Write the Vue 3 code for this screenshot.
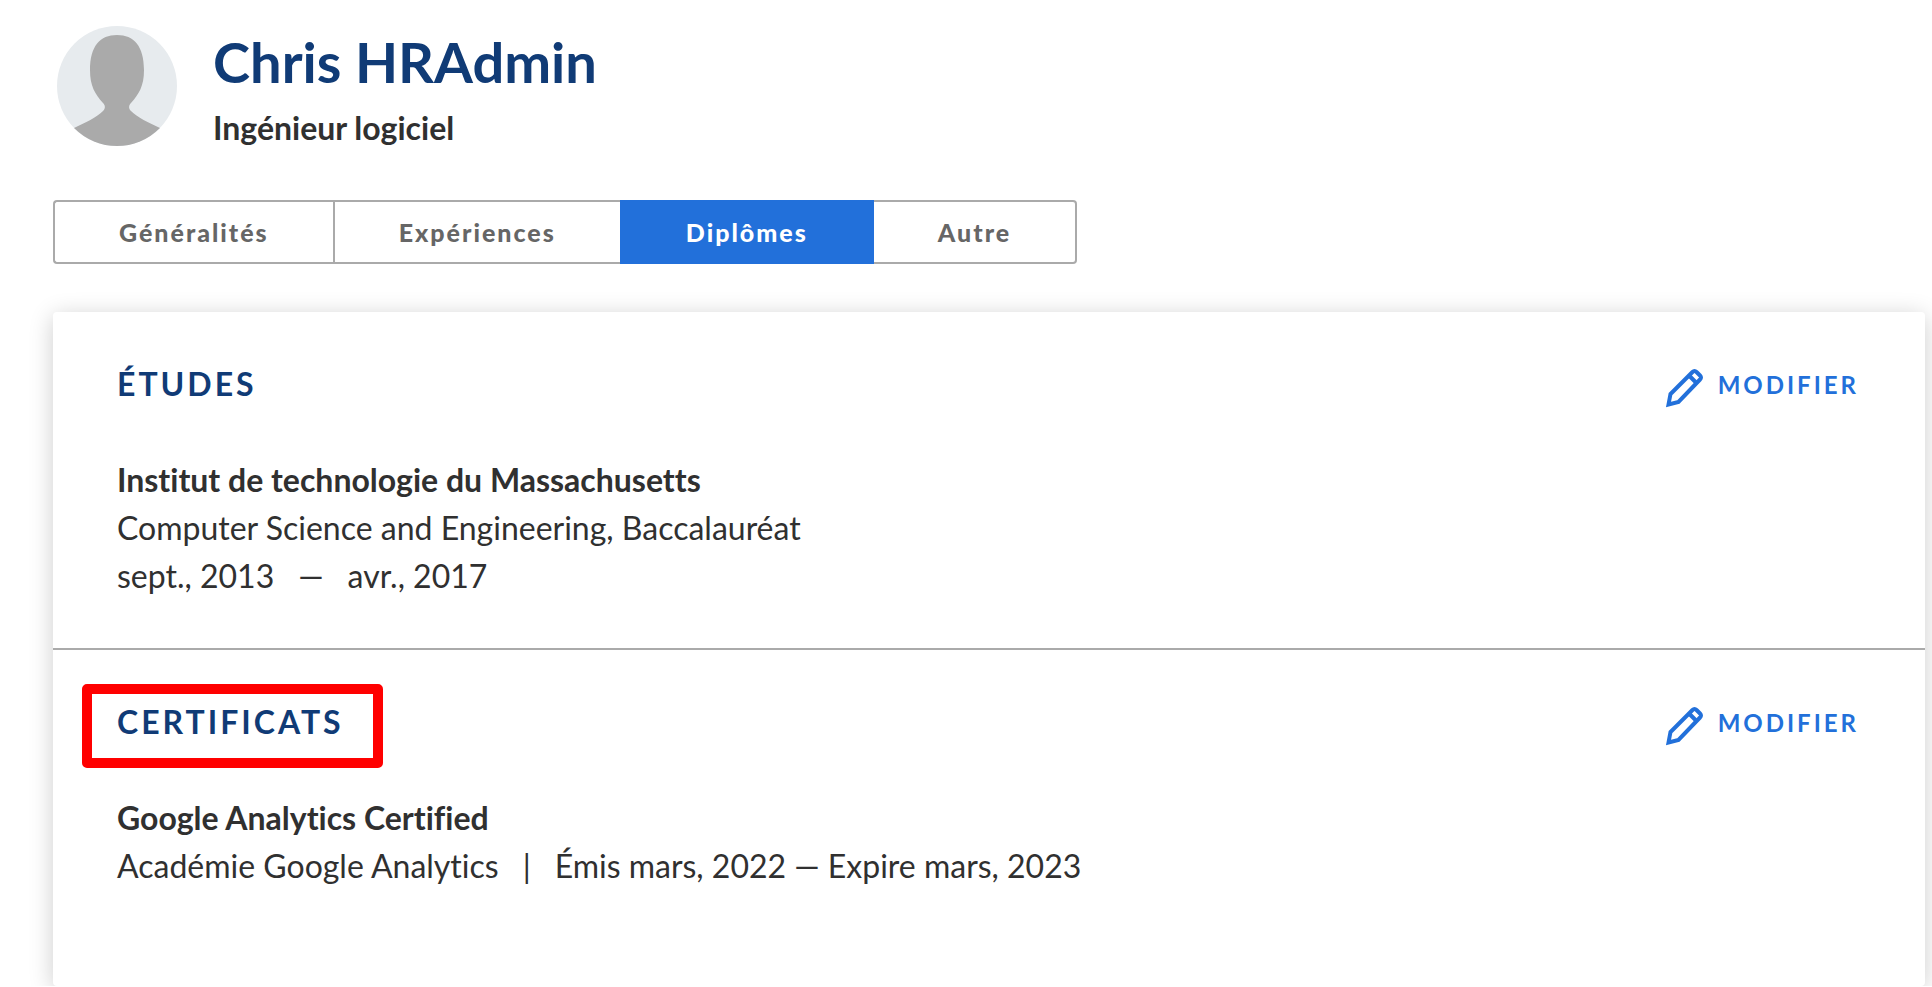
<!--src/components/EmployeeProfile.vue-->
<script setup>
import { ref } from "vue";

const employee = {
  name: "Chris HRAdmin",
  title: "Ingénieur logiciel"
};

const tabs = [
  { id: "general",    label: "Généralités" },
  { id: "experience", label: "Expériences" },
  { id: "degrees",    label: "Diplômes" },
  { id: "other",      label: "Autre" }
];
const activeTab = ref("degrees");

const sections = [
  {
    id: "education",
    title: "Études",
    highlighted: false,
    name: "Institut de technologie du Massachusetts",
    lines: [
      ["Computer Science and Engineering, Baccalauréat"],
      ["sept., 2013", "—", "avr., 2017"]
    ]
  },
  {
    id: "certificates",
    title: "Certificats",
    highlighted: true,
    name: "Google Analytics Certified",
    lines: [
      ["Académie Google Analytics", "|", "Émis mars, 2022 — Expire mars, 2023"]
    ]
  }
];
</script>

<template>
  <main class="profile">
    <header class="profile__header">
      <svg class="profile__avatar" viewBox="0 0 120 120" role="img" aria-label="Photo de profil">
        <defs>
          <clipPath id="avatar-clip"><circle cx="60" cy="60" r="60"/></clipPath>
        </defs>
        <g clip-path="url(#avatar-clip)">
          <rect width="120" height="120" fill="#e7ebee"/>
          <path
              fill="#aaa"
              d="M60 9C43 9 33 20 33 44C33 60 38 68 46 77C48 79 49 82 46 85C40 91 28 97 17 102V120H103V102C92 97 80 91 74 85C71 82 72 79 74 77C82 68 87 60 87 44C87 20 77 9 60 9Z"
          />
        </g>
      </svg>
      <div>
        <h1 class="profile__name">{{ employee.name }}</h1>
        <p class="profile__title">{{ employee.title }}</p>
      </div>
    </header>

    <nav class="tabs">
      <button
          v-for="tab in tabs"
          :key="tab.id"
          type="button"
          class="tabs__item"
          :class="{ 'tabs__item--active': tab.id === activeTab }"
          @click="activeTab = tab.id"
      >{{ tab.label }}</button>
    </nav>

    <div class="card">
      <section v-for="section in sections" :key="section.id" class="section">
        <div class="section__head">
          <h2 class="section__title" :class="{ 'section__title--highlighted': section.highlighted }">
            {{ section.title }}
          </h2>
          <button type="button" class="edit">
            <svg class="edit__icon" viewBox="0 0 40 48" aria-hidden="true">
              <g fill="none" stroke="currentColor" stroke-width="4" transform="translate(0 7)">
                <path d="M4.500 37.500L6.500 27L28.500 5Q30.500 3 32.500 5L36 8.500Q38 10.500 36 12.500L14.500 35Z"/>
                <path d="M25 8.500L32.500 16"/>
              </g>
            </svg>
            <span>Modifier</span>
          </button>
        </div>
        <h3 class="section__name">{{ section.name }}</h3>
        <p v-for="(line, i) in section.lines" :key="i" class="section__line">
          <span v-for="part in line" :key="part">{{ part }}</span>
        </p>
      </section>
    </div>
  </main>
</template>

<style>
body{ background:#fff; }
</style>

<style scoped>
.profile{
  padding:20px 7px 0 53px;
  font-family:Lato, "Liberation Sans", sans-serif;
  font-size:32px;
  line-height:48px;
  font-variant-ligatures:no-common-ligatures;
  color:#303030;
}
h1, h2, h3, p{ margin:0; }
button{
  font-family:inherit;
  cursor:pointer;
}

/* Header */
.profile__header{
  display:flex;
  align-items:center;
  gap:36px;
  padding-left:4px;
}
.profile__avatar{ width:120px; height:120px; flex:none; }
.profile__name{
  font-size:56px; line-height:84px; font-weight:700; color:#103b76;
}
.profile__title{ font-weight:700; }

/* Tabs */
.tabs{
  display:flex;
  width:fit-content;
  margin-top:48px;
}
.tabs__item{
  height:64px;
  padding:0 64px;
  border:2px solid #aaa;
  border-right-width:0;
  background:#fff;
  font-size:25px;
  font-weight:900;
  letter-spacing:2px;
  color:#666;
}
.tabs__item:first-child{ border-radius:4px 0 0 4px; }
.tabs__item:last-child{ border-right-width:2px; border-radius:0 4px 4px 0; }
.tabs__item--active{ border-width:2px; background:#2270da; border-color:#2270da; color:#fff; }
.tabs__item--active + .tabs__item{ border-left-width:0; }

/* Card */
.card{
  margin-top:48px;
  padding-bottom:48px;
  border-radius:4px;
  background:#fff;
  box-shadow:0 4px 24px rgba(0,0,0,.2);
}
.section{ padding:48px 64px; }
.section + .section{ border-top:2px solid #aaa; }
.section__head{
  display:flex;
  align-items:center;
  justify-content:space-between;
  margin-bottom:48px;
}
.section__title{
  position:relative;
  font-size:32px;
  font-weight:700;
  letter-spacing:3px;
  text-transform:uppercase;
  color:#103b76;
}
/* frame lying over the card around the title */
.section__title--highlighted::after{
  content:"";
  position:absolute;
  inset:-14px -39px -22px -35px;
  border:10px solid #f00;
  border-radius:5px;
  pointer-events:none;
}
.section__name{ font-size:32px; font-weight:700; }
.section__line{ display:flex; flex-wrap:wrap; gap:0 24px; }

.edit{
  display:flex;
  align-items:center;
  gap:14px;
  padding:0 2px;
  border:0;
  background:none;
  font-size:24px;
  font-weight:700;
  letter-spacing:3px;
  color:#2270da;
  text-transform:uppercase;
}
.edit__icon{ width:40px; height:48px; }
</style>
